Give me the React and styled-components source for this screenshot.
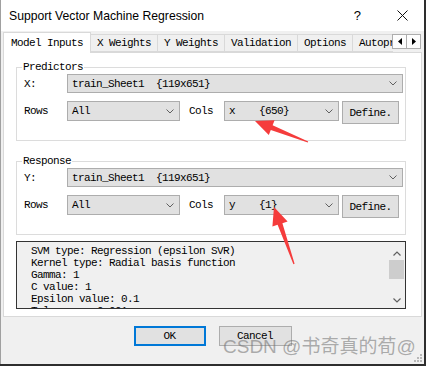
import React from 'react'
import styled, { createGlobalStyle } from 'styled-components'

const GlobalStyle = createGlobalStyle`
  html, body {
    margin: 0;
    padding: 0;
    background: #2e2e2e;
  }
  #root {
    width: 426px;
    height: 366px;
  }
`

const Window = styled.div`
  position: relative;
  width: 424px;
  height: 364px;
  box-sizing: border-box;
  border-left: 1px solid #a0a0a0;
  background: #f0f0f0;
  display: flex;
  flex-direction: column;
  font-family: "Liberation Mono", monospace;
  font-size: 11px;
  letter-spacing: -0.6px;
  color: #000;
`

const TitleBar = styled.div`
  height: 31px;
  background: #fff;
  display: flex;
  align-items: center;
  padding-left: 8px;
`

const Title = styled.div`
  flex: 1;
  font-family: "Liberation Sans", Arial, sans-serif;
  font-size: 12.2px;
  letter-spacing: 0;
  color: #000;
`

const Help = styled.div`
  font-family: "Liberation Sans", Arial, sans-serif;
  font-size: 13px;
  letter-spacing: 0;
  margin-right: 36px;
`

const Close = styled.svg`
  width: 11px;
  height: 11px;
  margin-right: 16px;
`

const TabStrip = styled.div`
  margin-top: 1px;
  height: 20px;
  padding-left: 2px;
  display: flex;
  align-items: flex-end;
  position: relative;
  z-index: 1;
`

const TabList = styled.div`
  flex: 1;
  display: flex;
  align-items: flex-end;
  overflow: hidden;
  height: 21px;
  margin-bottom: -1px;
`

const Tab = styled.div`
  flex-shrink: 0;
  box-sizing: border-box;
  height: ${p => (p.$active ? '21px' : '18px')};
  margin-bottom: ${p => (p.$active ? '0' : '1px')};
  padding: 0 ${p => (p.$active ? '7px' : '6px')};
  margin-left: -1px;
  border: 1px solid #d9d9d9;
  border-bottom: ${p => (p.$active ? 'none' : '1px solid #d9d9d9')};
  background: ${p => (p.$active ? '#fff' : '#f0f0f0')};
  display: flex;
  align-items: center;
  white-space: nowrap;
  &:first-child {
    margin-left: 0;
  }
`

const Scrollers = styled.div`
  display: flex;
  align-self: flex-start;
  margin-top: 2px;
  margin-right: 3px;
`

const ScrollBtn = styled.div`
  width: 15px;
  height: 15px;
  box-sizing: border-box;
  border: 1px solid #adadad;
  margin-left: -1px;
  background: #fdfdfd;
  display: flex;
  align-items: center;
  justify-content: center;
`

const Panel = styled.div`
  margin: 0 2px;
  height: 265px;
  box-sizing: border-box;
  border: 1px solid #d9d9d9;
  background: #fff;
  padding: 14px 0 0 12px;
`

const Group = styled.div`
  position: relative;
  width: 390px;
  box-sizing: border-box;
  border: 1px solid #dcdcdc;
  padding: 6px 2px 16px 7px;
  margin-bottom: ${p => p.$gap || 0}px;
`

const Legend = styled.span`
  position: absolute;
  top: -7px;
  left: 5px;
  padding: 0 1px;
  background: #fff;
  line-height: 12px;
`

const Row = styled.div`
  display: flex;
  align-items: flex-start;
  margin-top: ${p => p.$top || 0}px;
`

const Label = styled.div`
  width: ${p => p.$w}px;
  height: ${p => p.$h}px;
  margin-left: ${p => p.$left || 0}px;
  display: flex;
  align-items: center;
  flex-shrink: 0;
`

const Select = styled.div`
  width: ${p => p.$w}px;
  height: ${p => p.$h}px;
  box-sizing: border-box;
  border: 1px solid #adadad;
  background: #e1e1e1;
  display: flex;
  align-items: center;
  padding-left: 4px;
  white-space: pre;
  flex-shrink: 0;
`

const SelectText = styled.span`
  flex: 1;
`

const Chevron = styled.svg`
  width: 8px;
  height: 5px;
  margin-right: 5px;
`

const Button = styled.div`
  width: ${p => p.$w}px;
  height: ${p => p.$h}px;
  box-sizing: border-box;
  border: ${p => (p.$default ? '2px solid #0078d7' : '1px solid #adadad')};
  background: #e1e1e1;
  display: flex;
  align-items: center;
  justify-content: center;
  margin-left: ${p => p.$left || 0}px;
  flex-shrink: 0;
`

const Output = styled.div`
  margin-top: 6px;
  width: 390px;
  height: 68px;
  box-sizing: border-box;
  border: 1px solid #333;
  background: #f0f0f0;
  display: flex;
`

const OutputText = styled.div`
  flex: 1;
  overflow: hidden;
  padding: 3px 0 0 14px;
  line-height: 12px;
  white-space: pre;
`

const ScrollBar = styled.div`
  width: 17px;
  display: flex;
  flex-direction: column;
  align-items: center;
`

const ScrollArrow = styled.svg`
  width: 8px;
  height: 5px;
  margin: ${p => p.$m};
`

const Thumb = styled.div`
  width: 15px;
  height: 19px;
  background: #cdcdcd;
`

const Footer = styled.div`
  flex: 1;
  display: flex;
  justify-content: center;
  align-items: flex-start;
  padding-top: 9px;
  gap: 13px;
`

const Watermark = styled.div`
  position: absolute;
  left: 222px;
  top: 331px;
  font-family: "Liberation Sans", "Noto Sans CJK SC", sans-serif;
  font-size: 19px;
  letter-spacing: 0;
  color: rgba(110, 110, 110, 0.55);
  white-space: nowrap;
`

const Overlay = styled.svg`
  position: absolute;
  left: -1px;
  top: 0;
  width: 426px;
  height: 366px;
  pointer-events: none;
`

const Grip = styled.svg`
  position: absolute;
  right: 2px;
  bottom: 2px;
  width: 8px;
  height: 8px;
`

const Down = () => (
  <Chevron viewBox="0 0 8 5">
    <polyline points="0.5,0.5 4,4 7.5,0.5" fill="none" stroke="#606060" strokeWidth="1" />
  </Chevron>
)

const Combo = ({ w, h, children }) => (
  <Select $w={w} $h={h}>
    <SelectText>{children}</SelectText>
    <Down />
  </Select>
)

const VarGroup = ({ title, name, cols, gap }) => (
  <Group $gap={gap}>
    <Legend>{title}</Legend>
    <Row>
      <Label $w={43} $h={19}>{name}</Label>
      <Combo w={336} h={19}>{'train_Sheet1  {119x651}'}</Combo>
    </Row>
    <Row $top={8}>
      <Label $w={43} $h={20}>Rows</Label>
      <Combo w={113} h={20}>All</Combo>
      <Label $w={35} $h={20} $left={9}>Cols</Label>
      <Combo w={115} h={20}>{cols}</Combo>
      <Button $w={57} $h={23} $left={3}>Define.</Button>
    </Row>
  </Group>
)

const tabs = ['Model Inputs', 'X Weights', 'Y Weights', 'Validation', 'Options', 'Autoprep']

export default function App() {
  return (
    <>
      <GlobalStyle />
      <Window>
        <TitleBar>
          <Title>Support Vector Machine Regression</Title>
          <Help>?</Help>
          <Close viewBox="0 0 11 11">
            <path d="M0.5 0.5 L10.5 10.5 M10.5 0.5 L0.5 10.5" stroke="#111" strokeWidth="1" />
          </Close>
        </TitleBar>
        <TabStrip>
          <TabList>
            {tabs.map((t, i) => (
              <Tab key={t} $active={i === 0}>{t}</Tab>
            ))}
          </TabList>
          <Scrollers>
            <ScrollBtn>
              <svg width="4" height="7" viewBox="0 0 4 7"><polygon points="4,0 0,3.5 4,7" fill="#000" /></svg>
            </ScrollBtn>
            <ScrollBtn>
              <svg width="4" height="7" viewBox="0 0 4 7"><polygon points="0,0 4,3.5 0,7" fill="#000" /></svg>
            </ScrollBtn>
          </Scrollers>
        </TabStrip>
        <Panel>
          <VarGroup title="Predictors" name="X:" cols={'x    {650}'} gap={20} />
          <VarGroup title="Response" name="Y:" cols={'y    {1}'} />
          <Output>
            <OutputText>
              {'SVM type: Regression (epsilon SVR)\nKernel type: Radial basis function\nGamma: 1\nC value: 1\nEpsilon value: 0.1\nTolerance: 0.001'}
            </OutputText>
            <ScrollBar>
              <ScrollArrow viewBox="0 0 8 5" $m="9px 0 4px">
                <polyline points="0.5,4.5 4,1 7.5,4.5" fill="none" stroke="#606060" strokeWidth="1.2" />
              </ScrollArrow>
              <Thumb />
              <ScrollArrow viewBox="0 0 8 5" $m="auto 0 5px">
                <polyline points="0.5,0.5 4,4 7.5,0.5" fill="none" stroke="#606060" strokeWidth="1.2" />
              </ScrollArrow>
            </ScrollBar>
          </Output>
        </Panel>
        <Footer>
          <Button $w={72} $h={20} $default>OK</Button>
          <Button $w={73} $h={20}>Cancel</Button>
        </Footer>
        <Watermark>CSDN @书奇真的荀@</Watermark>
        <Grip viewBox="0 0 8 8">
          <rect x="6" y="0" width="2" height="2" fill="#b8b8b8" />
          <rect x="3" y="3" width="2" height="2" fill="#b8b8b8" />
          <rect x="6" y="3" width="2" height="2" fill="#b8b8b8" />
          <rect x="0" y="6" width="2" height="2" fill="#b8b8b8" />
          <rect x="3" y="6" width="2" height="2" fill="#b8b8b8" />
          <rect x="6" y="6" width="2" height="2" fill="#b8b8b8" />
        </Grip>
        <Overlay viewBox="0 0 426 366">
          <polygon
            points="255,121 274.6,120.2 272.6,125.3 308.2,141.5 307.8,142.5 270.8,129.9 268.8,135"
            fill="#f53c3c"
          />
          <polygon
            points="274,207 287.6,221.4 282.4,223.2 294.6,263.8 293.4,264.2 277.6,224.8 272.4,226.6"
            fill="#f53c3c"
          />
        </Overlay>
      </Window>
    </>
  )
}
